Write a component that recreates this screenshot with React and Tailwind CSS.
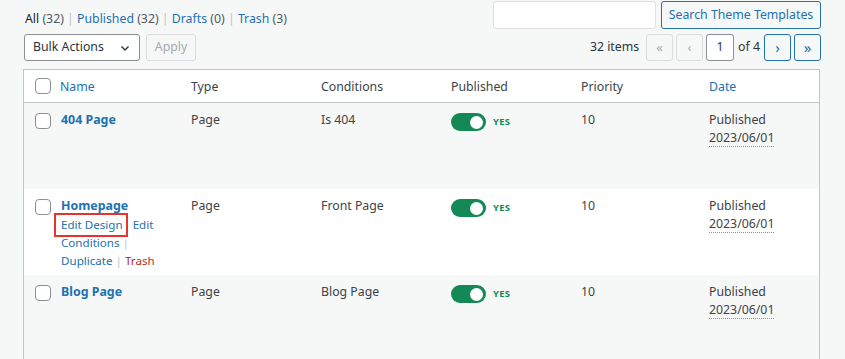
import React from "react";

const rows = [
    { name: "404 Page", type: "Page", cond: "Is 404", bg: "bg-[#f6f7f7]", actions: false },
    { name: "Homepage", type: "Page", cond: "Front Page", bg: "bg-white", actions: true },
    { name: "Blog Page", type: "Page", cond: "Blog Page", bg: "bg-[#f6f7f7]", actions: false },
];

function Checkbox() {
    return <span className="block w-4 h-4 rounded-[4px] border border-[#8c8f94] bg-white" />;
}

function Toggle() {
    return (
        <div className="flex items-center gap-[7px]">
            <span className="flex items-center justify-end w-[35px] h-[18px] rounded-full bg-[#138a56] pr-[3px]">
                <span className="w-[13px] h-[13px] rounded-full bg-white" />
            </span>
            <span className="text-[9.5px] font-bold text-[#138a56] tracking-[0.2px]">YES</span>
        </div>
    );
}

function PageBtn({ children, active }) {
    return (
        <span
            className={
                active
                    ? "flex items-center justify-center w-[27px] h-[27px] rounded-[3px] border border-[#2271b1] bg-[#f6f7f7] text-[#2271b1] text-[15px]"
                    : "flex items-center justify-center w-[27px] h-[27px] rounded-[3px] border border-[#dcdcde] bg-[#f6f7f7] text-[#a7aaad] text-[13px]"
            }
        >
            {children}
        </span>
    );
}

export default function App() {
    return (
        <div className="w-[845px] h-[359px] overflow-hidden bg-[#f6f7f7] text-[12.3px] text-[#3c434a]" style={{ fontFamily: '"Noto Sans", "Open Sans", sans-serif' }}>
            <div className="pl-[25px] pr-[25px]">
                {/* top line */}
                <div className="flex items-start justify-between h-[33px] pt-px">
                    <div className="mt-[8px] leading-[20px]">
                        <span className="text-[#1d2327]">All</span> <span className="text-[#50575e]">(32)</span>
                        <span className="text-[#c3c4c7]"> | </span>
                        <span className="text-[#2271b1]">Published</span> <span className="text-[#50575e]">(32)</span>
                        <span className="text-[#c3c4c7]"> | </span>
                        <span className="text-[#2271b1]">Drafts</span> <span className="text-[#50575e]">(0)</span>
                        <span className="text-[#c3c4c7]"> | </span>
                        <span className="text-[#2271b1]">Trash</span> <span className="text-[#50575e]">(3)</span>
                    </div>
                    <div className="flex gap-[5px] -mr-[1px]">
                        <div className="w-[163px] h-[28px] bg-white border border-[#e0e0e0] rounded-[3px]" />
                        <div className="w-[160px] h-[28px] flex items-center justify-center rounded-[3px] border border-[#2271b1] bg-[#f6f7f7] text-[#2271b1]">
                            Search Theme Templates
                        </div>
                    </div>
                </div>

                {/* tablenav */}
                <div className="flex items-center justify-between h-[29px] -ml-[1px] -mr-[1px]">
                    <div className="flex gap-[6px]">
                        <div className="w-[116px] h-[27px] flex items-center justify-between pl-[8px] pr-[8px] bg-white border border-[#8c8f94] rounded-[3px] text-[#2c3338]">
                            <span>Bulk Actions</span>
                            <svg width="12" height="12" viewBox="0 0 12 12"><path d="M2.5 4.5 L6 8 L9.5 4.5" fill="none" stroke="#2c3338" strokeWidth="1.4" /></svg>
                        </div>
                        <div className="w-[50px] h-[27px] flex items-center justify-center rounded-[3px] border border-[#dcdcde] bg-[#f6f7f7] text-[#a7aaad]">
                            Apply
                        </div>
                    </div>
                    <div className="flex items-center">
                        <span className="mr-[7px] text-[#2c3338]">32 items</span>
                        <div className="flex items-center gap-[3px]">
                            <PageBtn>«</PageBtn>
                            <PageBtn>‹</PageBtn>
                            <span className="w-[28px] h-[27px] flex items-center justify-center bg-white border border-[#8c8f94] rounded-[3px] text-[#2c3338]">1</span>
                            <span className="mx-[1px] text-[#2c3338]">of 4</span>
                            <PageBtn active>›</PageBtn>
                            <PageBtn active>»</PageBtn>
                        </div>
                    </div>
                </div>
            </div>

            {/* table */}
            <div className="ml-[23px] mr-[25px] mt-[7px] border border-[#c3c4c7]">
                <div className="flex items-center h-[33px] pt-[2px] bg-white border-b border-[#c3c4c7]">
                    <div className="w-[27px] pl-[11px] -mt-[2px]"><Checkbox /></div>
                    <div className="w-[130px] pl-[9px] text-[#2271b1]">Name</div>
                    <div className="w-[130px] pl-[10px]">Type</div>
                    <div className="w-[130px] pl-[10px]">Conditions</div>
                    <div className="w-[130px] pl-[10px]">Published</div>
                    <div className="w-[128px] pl-[10px]">Priority</div>
                    <div className="flex-1 pl-[10px] text-[#2271b1]">Date</div>
                </div>
                {rows.map((r, i) => (
                    <div key={i} className={`flex items-start h-[86px] pt-[7px] leading-[18px] ${r.bg}`}>
                        <div className="w-[27px] pl-[11px] pt-[3px]"><Checkbox /></div>
                        <div className="w-[130px] pl-[10px]">
                            <div className="text-[12.4px] font-bold text-[#2271b1] leading-[20px]">{r.name}</div>
                            {r.actions && (
                                <div className="text-[11.6px] leading-[18px] text-[#2271b1]">
                                    <div>
                                        <span className="relative">
                                            Edit Design
                                            <span className="absolute -left-[7px] -right-[5px] -top-[4px] -bottom-[5px] border-2 border-[#e8322d]" />
                                        </span>
                                        <span className="ml-[10px]">Edit</span>
                                    </div>
                                    <div>Conditions <span className="text-[#c3c4c7]">|</span></div>
                                    <div>Duplicate <span className="text-[#c3c4c7]">|</span> <span className="text-[#b32d2e]">Trash</span></div>
                                </div>
                            )}
                        </div>
                        <div className="w-[130px] pl-[10px] pt-[1px]">{r.type}</div>
                        <div className="w-[130px] pl-[10px] pt-[1px]">{r.cond}</div>
                        <div className="w-[130px] pl-[10px] pt-[3px]"><Toggle /></div>
                        <div className="w-[128px] pl-[10px] pt-[1px]">10</div>
                        <div className="flex-1 pl-[10px] pt-[1px]">
                            <div>Published</div>
                            <div><span className="border-b border-dotted border-[#8c8f94]">2023/06/01</span></div>
                        </div>
                    </div>
                ))}
            </div>
        </div>
    );
}
